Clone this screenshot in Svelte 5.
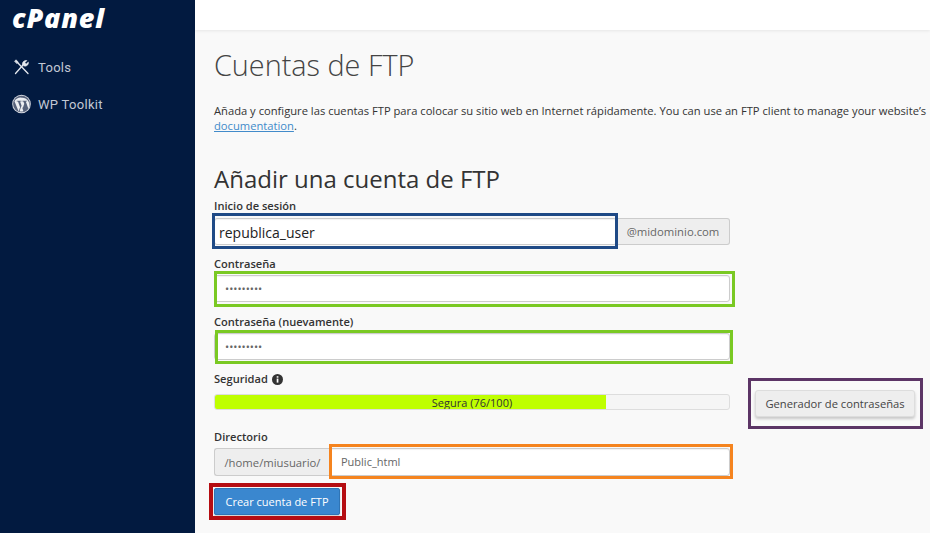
<script>
  const nav = [
    { id: 'tools', label: 'Tools' },
    { id: 'wp', label: 'WP Toolkit' }
  ]

  // hand-drawn highlight boxes on top of the form
  const marks = [
    { name: 'blue', x: 212, y: 213, w: 406, h: 36 },
    { name: 'green', x: 214, y: 271, w: 521, h: 36 },
    { name: 'green', x: 215, y: 330, w: 518, h: 34 },
    { name: 'purple', x: 748, y: 378, w: 175, h: 51 },
    { name: 'orange', x: 329, y: 444, w: 404, h: 35 },
    { name: 'red', x: 209, y: 483, w: 137, h: 37 }
  ]
</script>

<div class="page">
  <aside class="sidebar">
    <div class="logo">cPanel</div>
    <nav>
      {#each nav as item}
        <a class="nav-item" href="#{item.id}">
          {#if item.id === 'tools'}
            <svg width="18" height="18" viewBox="0 0 18 18" fill="none" stroke="#e6e9ef" stroke-width="1.3" stroke-linecap="round">
              <path d="M3 15.500 10.500 7" />
              <path d="M10 6.800c-.6-2.400 1.500-4.800 4.400-4.300l-2 2.200 1.300 1.400 2.200-2c.4 2.800-1.900 4.600-4.200 4z" fill="#e6e9ef" stroke-width=".6" />
              <path d="M5 4.500 15.500 15.500" />
              <path d="M2.200 3.200 3.400 1.800 5.800 4 4.600 5.400z" fill="#e6e9ef" stroke-width=".6" />
            </svg>
          {:else}
            <svg width="20" height="20" viewBox="0 0 20 20">
              <circle cx="10" cy="10" r="9.800" fill="#d5d8df" />
              <circle cx="10" cy="10" r="8.800" fill="#56617a" />
              <path d="M2.600 7 7 17.800l1.500-4.300L6.300 7.400H5V6.500h5v.9H8.500l2.700 7.300 1.700-4.900-.9-2.400h-1V6.500h4.700v.9h-1.200l2.700 7.500c1.500-2.300 1.300-5 .6-6.600-1.400-3.900-4.700-5.100-7.800-5C7 3 4.100 4.400 2.600 7z" fill="#eceef2" />
              <path d="M10 11.500 8 17.600c1.300.4 2.700.4 4-.1z" fill="#eceef2" />
            </svg>
          {/if}
          <span>{item.label}</span>
        </a>
      {/each}
    </nav>
  </aside>

  <div class="main">
    <div class="topbar"></div>
    <main class="content">
      <h1>Cuentas de FTP</h1>
      <p class="intro">
        Añada y configure las cuentas FTP para colocar su sitio web en Internet rápidamente. You can use an FTP client to manage your website’s<br />
        <a href="#doc">documentation</a>.
      </p>

      <h2>Añadir una cuenta de FTP</h2>

      <form class="form">
        <div class="field first">
          <label for="login">Inicio de sesión</label>
          <div class="group">
            <input id="login" class="login" value="republica_user" />
            <span class="addon addon-right">@midominio.com</span>
          </div>
        </div>

        <div class="field">
          <label for="pass">Contraseña</label>
          <input id="pass" class="pass" type="password" value="123456789" />
        </div>

        <div class="field">
          <label for="pass2">Contraseña (nuevamente)</label>
          <input id="pass2" class="pass" type="password" value="123456789" />
        </div>

        <div class="field strength-row">
          <div class="strength">
            <div class="label-line">
              <span class="label">Seguridad</span>
              <svg width="11" height="11" viewBox="0 0 11 11">
                <circle cx="5.500" cy="5.500" r="5.500" fill="#333" />
                <rect x="4.700" y="4.600" width="1.700" height="4" fill="#fff" />
                <rect x="4.700" y="2.200" width="1.700" height="1.500" fill="#fff" />
              </svg>
            </div>
            <div class="meter">
              <div class="meter-fill" style="width: {76}%"></div>
              <span class="meter-text">Segura (76/100)</span>
            </div>
          </div>
          <button type="button" class="gen">Generador de contraseñas</button>
        </div>

        <div class="field dir">
          <label for="dir">Directorio</label>
          <div class="group">
            <span class="addon addon-left">/home/miusuario/</span>
            <input id="dir" class="dir-input" value="Public_html" />
          </div>
        </div>

        <button type="button" class="submit">Crear cuenta de FTP</button>
      </form>
    </main>
  </div>

  {#each marks as m}
    <div class="mark {m.name}" style="left: {m.x}px; top: {m.y}px; width: {m.w}px; height: {m.h}px"></div>
  {/each}
</div>

<style>
  :global(body) {
    margin: 0;
    overflow: hidden;
  }

  .page {
    position: relative;
    display: flex;
    width: 930px;
    height: 533px;
    overflow: hidden;
    background: #f9f9f9;
    font-family: "Open Sans", sans-serif;
    color: #333;
  }

  .sidebar {
    flex: 0 0 195px;
    background: #021a40;
  }

  .logo {
    height: 36px;
    padding: 2px 0 0 12px;
    box-sizing: border-box;
    font-family: "Open Sans", sans-serif;
    font-size: 27px;
    line-height: 32px;
    font-weight: 800;
    font-style: italic;
    letter-spacing: 0.8px;
    color: #fff;
  }

  nav {
    display: flex;
    flex-direction: column;
    padding-top: 21px;
    gap: 17px;
  }

  .nav-item {
    display: flex;
    align-items: center;
    gap: 7px;
    height: 20px;
    padding-left: 12px;
    font-family: Roboto, sans-serif;
    font-size: 13px;
    letter-spacing: 0.3px;
    color: #c2c8d4;
    text-decoration: none;
  }

  .nav-item svg:first-child {
    width: 19px;
  }

  .main {
    flex: 1;
    min-width: 0;
  }

  .topbar {
    height: 30px;
    background: #fff;
    box-shadow: 0 1px 3px rgba(0, 0, 0, 0.08);
  }

  .content {
    padding: 0 0 0 19px;
  }

  h1 {
    margin: 16px 0 0;
    font-size: 28.800px;
    line-height: 38px;
    font-weight: 300;
    color: #444;
    white-space: nowrap;
  }

  .intro {
    margin: 19px 0 0;
    font-size: 11.200px;
    line-height: 15px;
    white-space: nowrap;
    color: #333;
  }

  .intro a {
    color: #428bca;
    text-decoration: underline;
  }

  h2 {
    margin: 31px 0 0;
    font-size: 24px;
    line-height: 30px;
    font-weight: 400;
    color: #333;
  }

  .form {
    width: 516px;
    margin-top: 5px;
  }

  label,
  .label {
    display: block;
    font-size: 11.100px;
    line-height: 14px;
    font-weight: 600;
    color: #333;
  }

  .group {
    display: flex;
  }

  input {
    display: block;
    box-sizing: border-box;
    height: 27px;
    margin: 4px 0 0;
    padding: 0 10px;
    border: 1px solid #ccc;
    border-radius: 3px;
    background: #fff;
    font-family: "Open Sans", sans-serif;
    font-size: 11px;
    color: #666;
    box-shadow: inset 0 1px 1px rgba(0, 0, 0, 0.05);
  }

  .login {
    flex: 1;
    min-width: 0;
    margin-top: 5px;
    padding: 2px 10px 0 4px;
    font-size: 14px;
    color: #222;
  }

  .pass {
    width: 100%;
    margin-bottom: 13px;
    font-size: 11px;
  }

  .addon {
    box-sizing: border-box;
    display: flex;
    align-items: center;
    height: 27px;
    margin-top: 5px;
    background: #eee;
    border: 1px solid #ccc;
    font-size: 11.300px;
    color: #666;
  }

  .addon-right {
    flex: 0 0 113px;
    justify-content: center;
    border-left: 0;
    border-radius: 0 3px 3px 0;
  }

  .addon-left {
    flex: 0 0 116px;
    justify-content: center;
    border-right: 0;
    border-radius: 3px 0 0 3px;
  }

  .dir-input {
    flex: 1;
    min-width: 0;
    border-radius: 0 3px 3px 0;
  }

  .first .group {
    margin-bottom: 12px;
  }

  .strength-row {
    position: relative;
    margin-top: -1px;
  }

  .label-line {
    display: flex;
    align-items: center;
    gap: 4px;
  }

  .meter {
    position: relative;
    box-sizing: border-box;
    height: 16px;
    margin-top: 8px;
    background: #f5f5f5;
    border: 1px solid #ddd;
    border-radius: 3px;
    overflow: hidden;
  }

  .meter-fill {
    height: 100%;
    background: #bfff00;
  }

  .meter-text {
    position: absolute;
    inset: 0;
    display: flex;
    align-items: center;
    justify-content: center;
    font-size: 11px;
    color: #333;
  }

  .gen {
    position: absolute;
    left: 541px;
    top: 18px;
    width: 160px;
    height: 27px;
    padding: 0;
    background: #eee;
    border: 1px solid #ddd;
    border-radius: 3px;
    box-shadow: 0 2px 3px rgba(0, 0, 0, 0.2);
    font-family: "Open Sans", sans-serif;
    font-size: 11.200px;
    color: #444;
  }

  .dir {
    margin-top: 20px;
  }

  .dir .addon {
    height: 28px;
    margin-top: 4px;
  }

  .dir input {
    height: 28px;
    padding: 0 10px 2px;
  }

  .submit {
    display: block;
    width: 126px;
    height: 27px;
    margin-top: 12px;
    padding: 0;
    background: #3a87cf;
    border: 1px solid #2f74b5;
    border-radius: 2px;
    box-shadow: 0 1px 2px rgba(0, 0, 0, 0.2);
    font-family: "Open Sans", sans-serif;
    font-size: 11px;
    color: #fff;
  }

  .mark {
    position: absolute;
    box-sizing: border-box;
    border: 3px solid;
    pointer-events: none;
  }

  .blue {
    border-color: #1f4a86;
  }

  .green {
    border-color: #7ac923;
  }

  .purple {
    border-color: #5c3566;
  }

  .orange {
    border-color: #f5841f;
  }

  .red {
    border-width: 4px;
    border-color: #b50d12;
  }
</style>
